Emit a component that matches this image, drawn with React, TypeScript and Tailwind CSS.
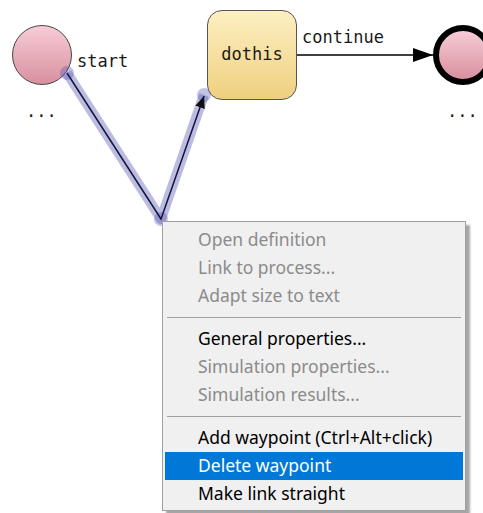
import React from "react";

const disabled = "text-[#8b8b8b]";

type Item = { label: string; enabled?: boolean; active?: boolean };

const groups: Item[][] = [
  [
    { label: "Open definition" },
    { label: "Link to process..." },
    { label: "Adapt size to text" },
  ],
  [
    { label: "General properties...", enabled: true },
    { label: "Simulation properties..." },
    { label: "Simulation results..." },
  ],
  [
    { label: "Add waypoint (Ctrl+Alt+click)", enabled: true },
    { label: "Delete waypoint", enabled: true, active: true },
    { label: "Make link straight", enabled: true },
  ],
];

const ContextMenu = () => (
  <div className="absolute left-[162px] top-[221px] w-[304px] border border-[#a0a0a0] bg-[#f0f0f0] pt-[4px] pb-[2px] px-[2px] shadow-[4px_4px_2px_rgba(0,0,0,0.35)] font-['Noto_Sans',sans-serif] text-[17.5px]">
    {groups.map((group, gi) => (
      <div key={gi}>
        {gi > 0 && (
          <div className="flex h-[15px] items-center px-[2px]">
            <div className="h-px w-full bg-[#a0a0a0]" />
          </div>
        )}
        {group.map((it) => (
          <div
            key={it.label}
            className={`flex h-[28px] items-center pl-[33px] leading-none ${
              it.active ? "bg-[#0078d7] text-white" : it.enabled ? "text-black" : disabled
            }`}
          >
            {it.label}
          </div>
        ))}
      </div>
    ))}
  </div>
);

const Links = () => (
  <svg className="absolute left-0 top-0" width="483" height="513">
    <defs>
      <marker id="arr" markerWidth="12" markerHeight="10" refX="12" refY="5" orient="auto" markerUnits="userSpaceOnUse">
        <path d="M0,0 L12,5 L0,10 Z" fill="#111" />
      </marker>
      <marker id="arr2" markerWidth="20" markerHeight="14" refX="20" refY="7" orient="auto" markerUnits="userSpaceOnUse">
        <path d="M0,0 L20,7 L0,14 Z" fill="#000" />
      </marker>
    </defs>
    {/* selected link highlight */}
    <polyline
      points="67,73 161,219 204,95"
      fill="none"
      stroke="rgba(80,80,180,0.38)"
      strokeWidth="10"
      strokeLinejoin="round"
    />
    <circle cx="67" cy="73" r="7" fill="rgba(80,80,180,0.35)" />
    <circle cx="161" cy="219" r="7" fill="rgba(80,80,180,0.35)" />
    <circle cx="204" cy="95" r="7" fill="rgba(80,80,180,0.35)" />
    <polyline
      points="67,73 161,219 204,96"
      fill="none"
      stroke="#15153a"
      strokeWidth="1.5"
      markerEnd="url(#arr)"
    />
    {/* continue link */}
    <line x1="297" y1="55" x2="433" y2="55" stroke="#000" strokeWidth="1.3" markerEnd="url(#arr2)" />
  </svg>
);

export default function App() {
  return (
    <div className="relative h-[513px] w-[483px] overflow-hidden bg-white font-['DejaVu_Sans_Mono',monospace] text-[17px] text-[#1a1a1a]">
      {/* start node */}
      <div className="absolute left-[12px] top-[25px] h-[60px] w-[60px] rounded-full border border-[#444] bg-linear-to-b from-[#f7ccd6] to-[#d8909f]" />
      <div className="absolute left-[77px] top-[53px] leading-none">start</div>
      <div className="absolute left-[26px] top-[103px] leading-none">...</div>

      {/* dothis node */}
      <div className="absolute left-[207px] top-[10px] flex h-[90px] w-[90px] items-center justify-center rounded-[15px] border border-[#555] bg-linear-to-b from-[#fdefc1] to-[#efd07f]">
        dothis
      </div>
      <div className="absolute left-[302px] top-[29px] leading-none">continue</div>

      {/* end node */}
      <div className="absolute left-[433px] top-[25px] h-[60px] w-[60px] rounded-full border-[6px] border-black bg-linear-to-b from-[#f7ccd6] to-[#d8909f]" />
      <div className="absolute left-[447px] top-[103px] leading-none">...</div>

      <Links />
      <ContextMenu />
    </div>
  );
}
